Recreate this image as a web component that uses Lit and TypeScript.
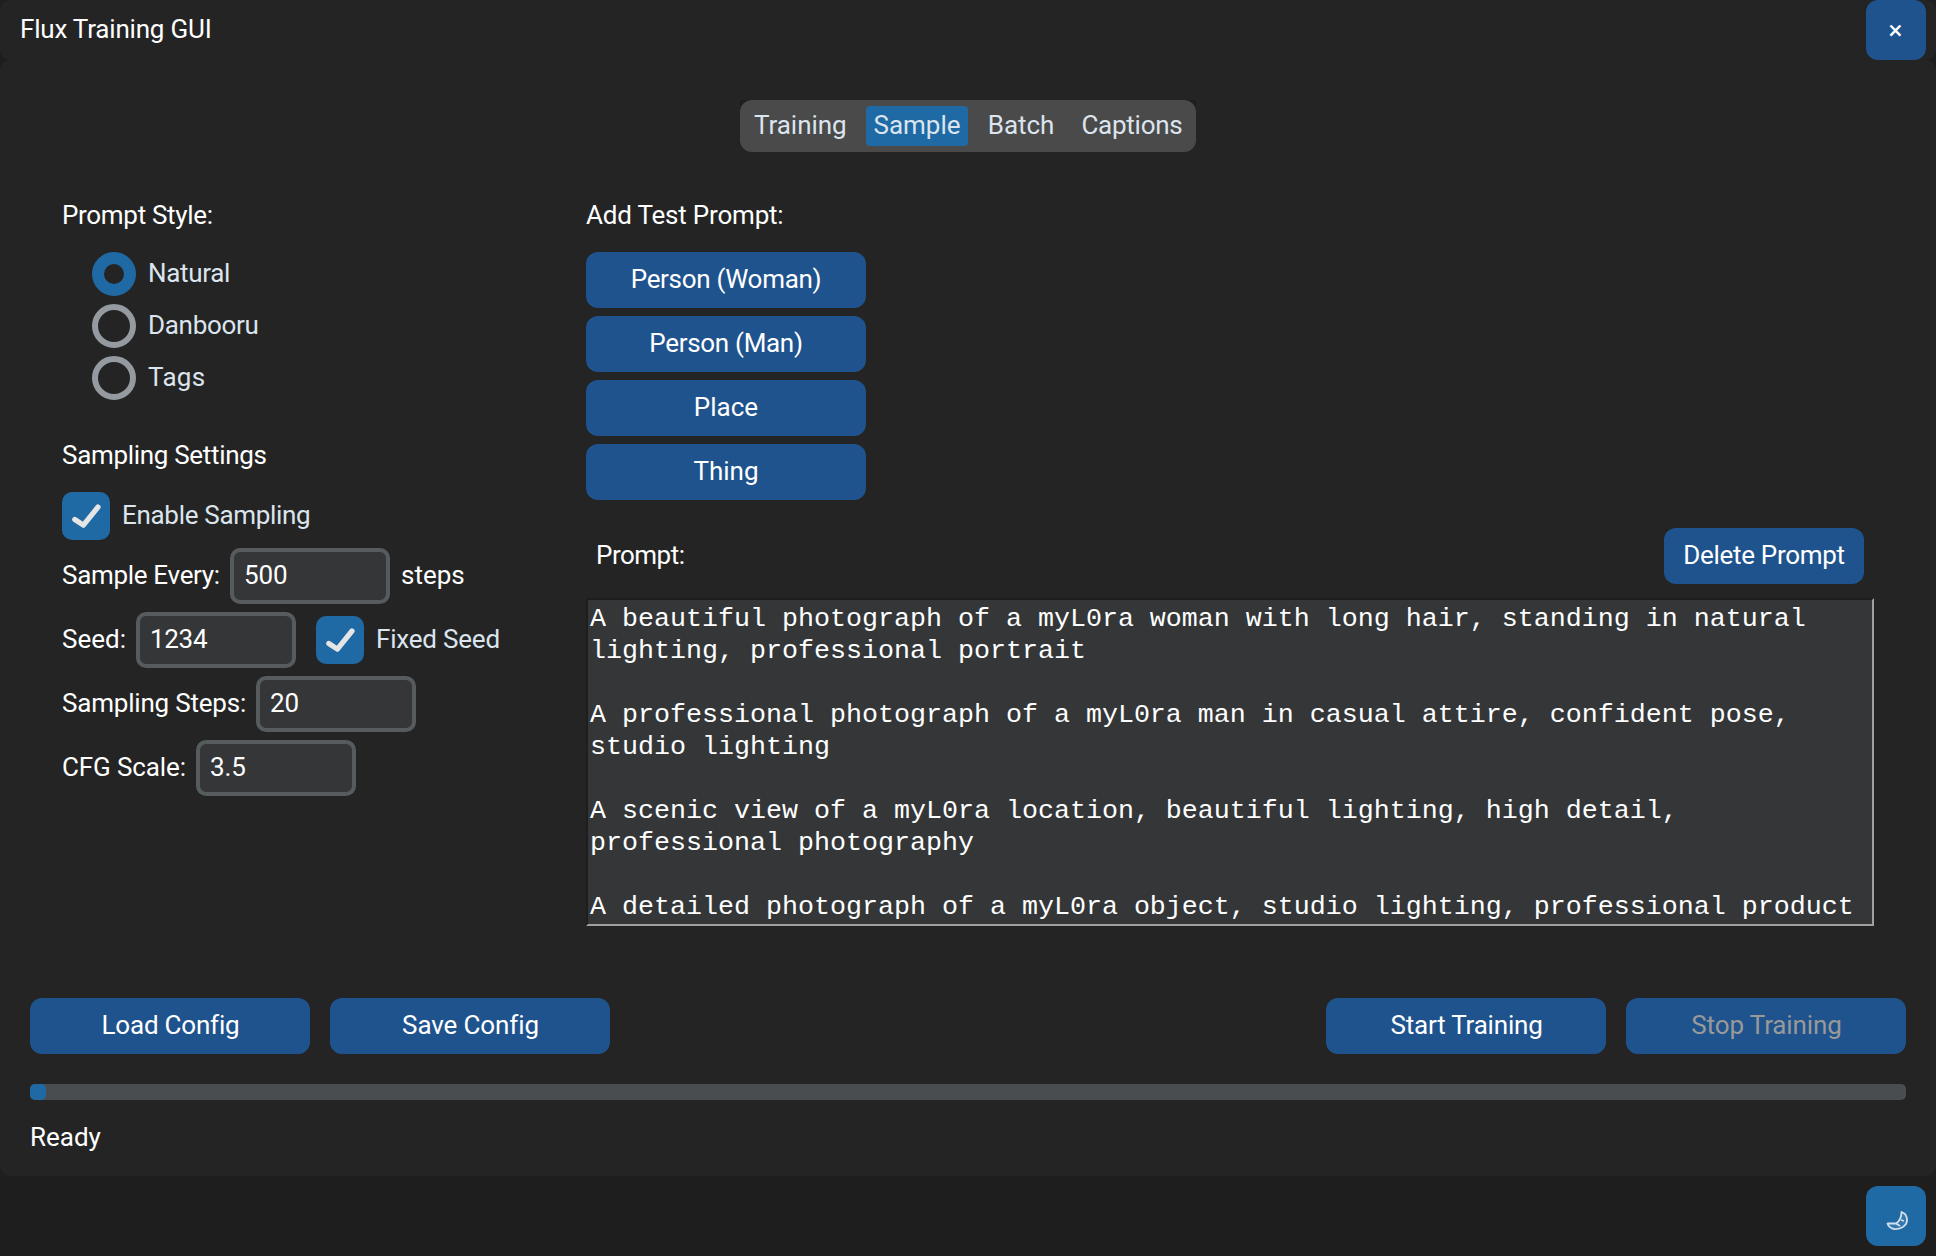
import { LitElement, html, css } from "lit";
import { customElement, property } from "lit/decorators.js";

const font = css`
  font-family: Roboto, "Liberation Sans", sans-serif;
  font-size: 26px;
`;

@customElement("ui-check")
class UiCheck extends LitElement {
  @property() label = "";
  static styles = css`
    :host { display: flex; align-items: center; gap: 12px; height: 48px; color: #dce4ee; white-space: nowrap; ${font} }
    .box { width: 48px; height: 48px; border-radius: 10px; background: #1f6aa5; display: block; }
    .text { line-height: 46px; height: 48px; }
  `;
  render() {
    return html`<svg class="box" viewBox="0 0 48 48"><path d="M12.8 27.5 L21.4 33.2 L36 15" fill="none" stroke="#e5e5e5" stroke-width="5.2" stroke-linecap="round" stroke-linejoin="round"/></svg><span class="text">${this.label}</span>`;
  }
}

@customElement("ui-radio")
class UiRadio extends LitElement {
  @property() label = "";
  @property({ type: Boolean }) checked = false;
  static styles = css`
    :host { display: flex; align-items: center; gap: 12px; height: 44px; color: #dce4ee; ${font} }
    .ring { box-sizing: border-box; width: 44px; height: 44px; border-radius: 50%; border: 6px solid #949a9f; }
    .on { border: 12px solid #1f6aa5; }
    .text { line-height: 42px; height: 44px; }
  `;
  render() {
    return html`<span class="ring ${this.checked ? "on" : ""}"></span><span class="text">${this.label}</span>`;
  }
}

const prompts = `A beautiful photograph of a myL0ra woman with long hair, standing in natural
lighting, professional portrait

A professional photograph of a myL0ra man in casual attire, confident pose,
studio lighting

A scenic view of a myL0ra location, beautiful lighting, high detail,
professional photography

A detailed photograph of a myL0ra object, studio lighting, professional product`;

const presets = [
  { name: "Person (Woman)", cls: "t3" },
  { name: "Person (Man)", cls: "t3" },
  { name: "Place", cls: "" },
  { name: "Thing", cls: "" },
];

@customElement("app-root")
class AppRoot extends LitElement {
  static styles = css`
    :host { display: flex; flex-direction: column; width: 1936px; height: 1256px; overflow: hidden; background: #1e1e1e; color: #fff; ${font} }
    * { box-sizing: border-box; }
    .titlebar { height: 60px; display: flex; justify-content: space-between; padding: 0 10px 0 20px; background: #242424; border-radius: 10px; }
    .title { line-height: 58px; letter-spacing: -0.2px; }
    .square { width: 60px; height: 60px; border: 0; padding: 0 1px 1px 0; border-radius: 12px; background: #1f538d; color: #fff; display: flex; justify-content: center; align-items: center; ${font} }
    .moon { background: #1f6aa5; padding: 0; }
    .panel { height: 1116px; padding: 40px 30px 0; background: #242424; border-radius: 10px; display: flex; flex-direction: column; }
    .tabs { align-self: center; width: 456px; height: 52px; background: linear-gradient(#1e1e1e 50%, #242424 50%); }
    .strip { height: 52px; border-radius: 12px; background: #4a4a4a; padding: 6px 0 6px 14px; display: flex; color: #dce4ee; }
    .tab { height: 40px; line-height: 38px; text-align: center; }
    .tab.first { width: 112px; text-align: left; letter-spacing: -0.05px; }
    .tab.active { background: #1f6aa5; border-radius: 4px; width: 102px; }
    .tab.mid { width: 106px; letter-spacing: -0.1px; }
    .tab.last { width: 116px; letter-spacing: -0.25px; }
    .t1 { letter-spacing: -0.12px; }
    .t2 { letter-spacing: -0.2px; }
    .t3 { letter-spacing: -0.31px; }
    .t5 { letter-spacing: -0.5px; }
    .wide { letter-spacing: 0.3px; }
    .body { display: grid; grid-template-columns: 524px 1288px; padding-left: 32px; height: 846px; }
    .heading { line-height: 58px; height: 56px; }
    .left { padding-top: 34px; display: flex; flex-direction: column; }
    .radios { padding: 10px 0 0 30px; display: flex; flex-direction: column; gap: 8px; }
    .settings { margin-top: 28px; height: 56px; line-height: 54px; }
    .enable { margin-top: 8px; }
    .row { display: flex; height: 56px; margin-top: 8px; }
    .label { line-height: 54px; white-space: nowrap; }
    .w1 { width: 168px; } .w2 { width: 74px; } .w3 { width: 194px; } .w4 { width: 134px; }
    .entry { width: 160px; height: 56px; border: 4px solid #565b5e; border-radius: 10px; background: #343638; color: #fff; padding: 0 10px 2px; outline: 0; ${font} }
    .unit { line-height: 54px; margin-left: 11px; }
    .fixed { margin: 4px 0 0 20px; }
    .right { padding-top: 34px; display: flex; flex-direction: column; }
    .stack { padding-top: 10px; display: flex; flex-direction: column; gap: 8px; }
    .btn { width: 280px; height: 56px; border: 0; border-radius: 12px; background: #1f538d; color: #fff; padding: 0 0 2px; ${font} }
    .btn.small { width: 200px; }
    .btn:disabled { color: #999; }
    .bar { display: flex; justify-content: space-between; padding: 28px 10px 0; height: 98px; }
    .bar .label { height: 56px; }
    .editor { width: 1288px; height: 328px; border: 2px solid #1e1e1e; border-right-color: #a0a0a0; border-bottom-color: #a0a0a0; background: #343638; white-space: pre; overflow: hidden; padding: 3px 0 0 2px; margin: 0; font-family: "Liberation Mono", "Courier New", monospace; font-size: 26.66px; line-height: 32px; }
    .actions { display: flex; height: 56px; gap: 20px; }
    .actions .btn { padding-left: 1px; }
    .gap { flex: 1; }
    .progress { margin-top: 30px; height: 16px; border-radius: 5px; background: #4a4d50; }
    .fill { width: 16px; height: 16px; border-radius: 5px; background: #1f6aa5; }
    .status { line-height: 58px; margin-top: 8px; }
    .footer { height: 80px; padding: 10px; display: flex; justify-content: flex-end; }
  `;

  render() {
    return html`
      <header class="titlebar"><span class="title">Flux Training GUI</span><button class="square">×</button></header>
      <main class="panel">
        <nav class="tabs"><div class="strip">
          <span class="tab first">Training</span><span class="tab active">Sample</span><span class="tab mid">Batch</span><span class="tab last">Captions</span>
        </div></nav>
        <section class="body">
          <div class="left">
            <div class="heading t3">Prompt Style:</div>
            <div class="radios">
              <ui-radio class="t3" label="Natural" checked></ui-radio>
              <ui-radio class="t3" label="Danbooru"></ui-radio>
              <ui-radio class="wide" label="Tags"></ui-radio>
            </div>
            <div class="settings t3">Sampling Settings</div>
            <ui-check class="enable t3" label="Enable Sampling"></ui-check>
            <div class="row"><span class="label w1 t3">Sample Every:</span><input class="entry t1" value="500"><span class="unit">steps</span></div>
            <div class="row"><span class="label w2">Seed:</span><input class="entry t3" value="1234"><ui-check class="fixed t2" label="Fixed Seed"></ui-check></div>
            <div class="row"><span class="label w3 t2">Sampling Steps:</span><input class="entry t1" value="20"></div>
            <div class="row"><span class="label w4 t1">CFG Scale:</span><input class="entry t1" value="3.5"></div>
          </div>
          <div class="right">
            <div class="heading t2">Add Test Prompt:</div>
            <div class="stack">
              ${presets.map((p) => html`<button class="btn ${p.cls}">${p.name}</button>`)}
            </div>
            <div class="bar"><span class="label t5">Prompt:</span><button class="btn small t3">Delete Prompt</button></div>
            <pre class="editor">${prompts}</pre>
          </div>
        </section>
        <div class="actions">
          <button class="btn t2">Load Config</button><button class="btn t1">Save Config</button><span class="gap"></span>
          <button class="btn t2">Start Training</button><button class="btn t1" disabled>Stop Training</button>
        </div>
        <div class="progress"><div class="fill"></div></div>
        <div class="status">Ready</div>
      </main>
      <footer class="footer"><button class="square moon">
        <svg width="60" height="60" viewBox="0 0 60 60"><path d="M35.5 26 L39 28 Q42.5 33 40 38 Q36 43.5 28 43 Q23 42 21.5 37.5 L30 37.5 Q35.5 34 35.5 26 Z M30 37.5 L34 40 M35 34 L38 35" fill="#3478b0" stroke="#d3dfea" stroke-width="1.8" stroke-linejoin="round"/></svg>
      </button></footer>
    `;
  }
}
